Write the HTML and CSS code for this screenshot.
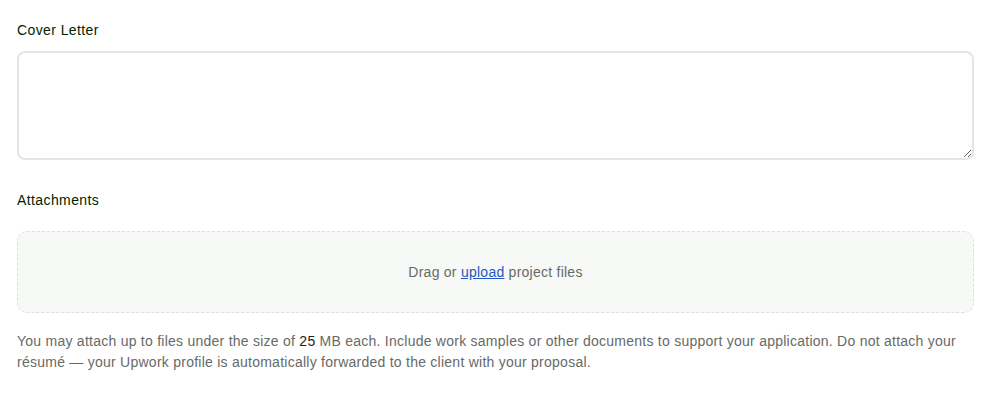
FILE: index.html
```html
<!DOCTYPE html>
<html lang="en">
<head>
  <meta charset="UTF-8">
  <title>Proposal</title>
  <link rel="stylesheet" href="styles.css">
</head>
<body>
  <div class="form">
    <div class="field">
      <label class="label" for="cover-letter">Cover Letter</label>
      <textarea id="cover-letter" class="textarea"></textarea>
    </div>

    <div class="field attach">
      <div class="label">Attachments</div>
      <div class="dropzone">
        <span>Drag or <a href="#" class="upload">upload</a> project files</span>
      </div>
      <p class="help">You may attach up to files under the size of <strong>25</strong> MB each. Include work samples or other documents to support your application. Do not attach your résumé — your Upwork profile is automatically forwarded to the client with your proposal.</p>
    </div>
  </div>
</body>
</html>
```

FILE: styles.css
```css
body {
  margin: 0;
  font-family: 'Liberation Sans', Arial, sans-serif;
  font-size: 14px;
  letter-spacing: 0.25px;
  color: #001e00;
  background: #fff;
}

.form {
  padding: 20px 27px 0 17px;
}

.field {
  display: flex;
  flex-direction: column;
}

.label {
  font-size: 14px;
  font-weight: 500;
  line-height: 20px;
  letter-spacing: 0.4px;
  margin-bottom: 11px;
  color: #001e00;
}

.textarea {
  height: 109px;
  box-sizing: border-box;
  border: 2px solid #e4e5e4;
  border-radius: 8px;
  padding: 8px 12px;
  font: inherit;
  resize: vertical;
  outline: none;
}

.attach {
  margin-top: 30px;
}

.dropzone {
  height: 82px;
  box-sizing: border-box;
  margin-top: 10px;
  border: 1px dashed #dde0dc;
  border-radius: 10px;
  background: #f7f9f6;
  display: flex;
  align-items: center;
  justify-content: center;
  color: #676a67;
}

.upload {
  color: #1f57c3;
  text-decoration: underline;
}

.help {
  margin: 18px 0 0;
  line-height: 21px;
  color: #676a67;
}

.help strong {
  font-weight: normal;
  color: #222;
}
```
